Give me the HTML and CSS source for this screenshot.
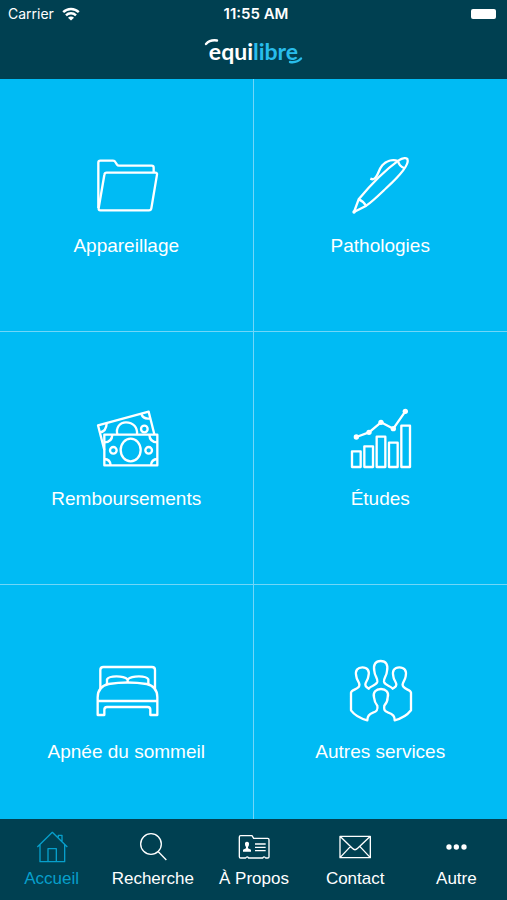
FILE: index.html
```html
<!DOCTYPE html>
<html lang="fr">
<head>
  <meta charset="UTF-8">
  <meta name="viewport" content="width=device-width, initial-scale=1.0">
  <title>Équilibre</title>
  <link rel="stylesheet" href="styles.css">
</head>
<body>

  <div class="app">

    <header class="header">
      <div class="status-bar">
        <div class="status-left">
          <span>Carrier</span>
          <svg class="wifi" viewBox="0 0 18 14" aria-hidden="true">
            <path d="M1.2 5.2a11 11 0 0 1 15.6 0" />
            <path d="M4 8.4a7 7 0 0 1 10 0" />
            <path class="solid" d="M9 13.500L6 10.700a4.200 4.200 0 0 1 6 0z" />
          </svg>
        </div>
        <span class="status-time">11:55 AM</span>
        <div class="status-right"><span class="battery"></span></div>
      </div>
      <div class="nav-bar">
        <h1 class="logo">
          <span>equi</span><span class="logo-light">libre</span>
          <svg class="logo-arcs" viewBox="0 0 100 30" aria-hidden="true">
            <path d="M3 8Q7 3.500 14 4.500" />
            <path class="arc-bottom" d="M87 26Q94 27 98 22.500" />
          </svg>
        </h1>
      </div>
    </header>

    <main class="tiles">
      <a class="tile" href="#appareillage">
        <svg class="tile-icon" viewBox="104 42 192 192" aria-hidden="true">
          <path d="M117 204V68q0-6 6-6h38q5 0 7 4l5 8q2 3 6 3h98q6 0 6 6v14" />
          <path d="M142 98h146q6 0 5 6l-17 101q-1 6-7 6H123q-6 0-5-7l17-99q1-7 7-7z" />
        </svg>
        <span>Appareillage</span>
      </a>
      <a class="tile" href="#pathologies">
        <svg class="tile-icon" viewBox="114 42 192 192" aria-hidden="true">
          <path d="M132 216L146 178C175 143 219 95 265 62C278 53 292 52 293 60C296 76 266 110 229 144C209 163 189 183 169 197Z" />
          <path d="M146 178Q159 183 168 197" />
          <path d="M264 63Q268 79 282 84" />
          <path d="M264 63C246 57 228 64 217 76C204 91 204 112 191 117Q187 119 181 116" />
          <circle class="solid" cx="132" cy="216" r="5" />
        </svg>
        <span>Pathologies</span>
      </a>
      <a class="tile" href="#remboursements">
        <svg class="tile-icon" viewBox="164 36 192 192" aria-hidden="true">
          <path d="M195 165L176 91L328 50L345 118" />
          <path d="M182 112Q201 109 202 85M306 57Q312 74 333 70" />
          <path d="M234 118C229 98 241 82 260 82C282 82 295 98 293 118" />
          <circle cx="315" cy="102" r="10" />
          <path d="M195 119H354V211H195Z" />
          <ellipse cx="274" cy="165" rx="30" ry="34" />
          <circle cx="222" cy="166" r="10" />
          <circle cx="328" cy="166" r="10" />
          <path d="M195 142Q218 142 219 119M330 119Q331 142 354 142M195 192Q213 193 214 211M335 211Q336 193 354 192" />
        </svg>
        <span>Remboursements</span>
      </a>
      <a class="tile" href="#etudes">
        <svg class="tile-icon" viewBox="114 36 192 192" aria-hidden="true">
          <path d="M126 169h26v47h-26zM163 154h26v62h-26zM200 125h26v91h-26zM237 143h26v73h-26zM274 92h26v124h-26z" />
          <path d="M139 126L177 112L213 82L250 101L286 49" />
          <g class="solid">
            <circle cx="139" cy="126" r="8" />
            <circle cx="177" cy="112" r="8" />
            <circle cx="213" cy="82" r="8" />
            <circle cx="250" cy="101" r="8" />
            <circle cx="286" cy="49" r="8" />
          </g>
        </svg>
        <span>Études</span>
      </a>
      <a class="tile" href="#apnee">
        <svg class="tile-icon" viewBox="164 30 192 192" aria-hidden="true">
          <path d="M183 116V60q0-9 9-9h146q9 0 9 9v56" />
          <path d="M203 103V88C210 76 251 76 265 88C279 76 320 76 327 88V103" />
          <path d="M265 87v10" />
          <path d="M175 195V142C175 119 186 107 208 102Q265 93 322 102C344 107 354 119 354 142V195H333V179q0-8-8-8H203q-8 0-8 8v16z" />
          <path d="M175 153h179" />
        </svg>
        <span>Apnée du sommeil</span>
      </a>
      <a class="tile" href="#services">
        <svg class="tile-icon" viewBox="144 45 192 192" aria-hidden="true">
          <path d="M202 226C177 219 161 207 153 196V143C154 133 181 132 178 119C178 110 170 107 169 94C164 75 174 67 187 67C202 67 210 77 205 94C204 106 196 110 196 119C196 126 201 127 206 131C213 121 230 122 232 110C233 98 224 94 223 78C219 58 227 48 242 48C258 48 265 59 261 78C260 94 251 98 252 110C254 122 271 121 278 131C283 127 289 126 289 119C289 110 281 106 280 94C276 77 283 67 298 67C312 67 321 76 317 94C315 107 308 110 308 119C306 132 332 133 333 143V196C323 209 308 220 284 226Q285 209 265 203C250 198 252 190 253 182C261 174 263 166 263 157C268 142 257 132 243 132C228 132 218 142 222 157C223 167 225 174 232 182C234 193 232 199 219 203Q202 209 202 226Z" />
        </svg>
        <span>Autres services</span>
      </a>
    </main>

    <nav class="tab-bar">
      <a class="tab active" href="#accueil">
        <svg class="tab-icon" viewBox="106 63 96 96" aria-hidden="true">
          <path d="M110 111L155 67L200 111M118 104v51h74v-51M142 155v-39h25v39M173 82v-6h11v19" />
        </svg>
        <span>Accueil</span>
      </a>
      <a class="tab" href="#recherche">
        <svg class="tab-icon" viewBox="410 63 96 96" aria-hidden="true">
          <circle cx="452" cy="102" r="31" />
          <path d="M474 125L498 150" />
        </svg>
        <span>Recherche</span>
      </a>
      <a class="tab" href="#apropos">
        <svg class="tab-icon" viewBox="715 63 96 96" aria-hidden="true">
          <path d="M723 77h34l5 8h42q4 0 4 4v52q0 3-4 3h-6q-4-7-9 0h-42q-5-7-9 0h-15q-4 0-4-4V81q0-4 4-4z" />
          <path class="solid" d="M742 95q7 0 6 8q0 5-3 8v4l9 4v6h-24v-6l9-4v-4q-3-3-3-8q-1-8 6-8z" />
          <path d="M766 102h32M766 112h32M766 122h32" />
        </svg>
        <span>À Propos</span>
      </a>
      <a class="tab" href="#contact">
        <svg class="tab-icon" viewBox="261 63 96 96" aria-hidden="true">
          <path d="M264 79h91v64h-91zM264 79L301 115Q309 123 317 115L355 79M264 143L295 110M355 143L324 110" />
        </svg>
        <span>Contact</span>
      </a>
      <a class="tab" href="#autre">
        <svg class="tab-icon" viewBox="564 63 96 96" aria-hidden="true">
          <g class="solid">
            <circle cx="591" cy="111" r="8" />
            <circle cx="613" cy="111" r="8" />
            <circle cx="636" cy="111" r="8" />
          </g>
        </svg>
        <span>Autre</span>
      </a>
    </nav>

  </div>

</body>
</html>
```
FILE: styles.css
```css
:root {
  --dark: #004051;
  --blue: #00bbf4;
  --line: #70d6f8;
  --logo-blue: #28bdeb;
  --tab-active: #079fcb;
}
* {
  box-sizing: border-box;
}
body {
  margin: 0;
  font-family: "Liberation Sans", Arial, sans-serif;
  background-color: var(--blue);
  color: #fff;
}
a {
  color: inherit;
  text-decoration: none;
}
svg {
  fill: none;
  stroke: currentColor;
  stroke-linejoin: round;
  overflow: visible;
}
.solid {
  fill: currentColor;
  stroke: none;
}
.app {
  display: flex;
  flex-direction: column;
  height: 100vh;
}

/* Barre de statut et logo */
.header {
  flex: none;
  background-color: var(--dark);
}
.status-bar {
  display: grid;
  grid-template-columns: 1fr auto 1fr;
  align-items: center;
  height: 27px;
  padding: 0 3px 0 8px;
  font-family: Inter, sans-serif;
  font-size: 14px;
}
.status-left {
  display: flex;
  align-items: center;
  gap: 8px;
}
.status-time {
  font-size: 15px;
  font-weight: 600;
}
.status-right {
  display: flex;
  justify-content: flex-end;
  padding-right: 8px;
}
.wifi {
  width: 18px;
  height: 14px;
  stroke-width: 2.4;
}
.battery {
  width: 25px;
  height: 10px;
  border-radius: 2px;
  background-color: #fff;
}
.nav-bar {
  display: flex;
  justify-content: center;
  height: 52px;
  padding-top: 9px;
}
.logo {
  position: relative;
  display: flex;
  margin: 0;
  font-family: Lato, sans-serif;
  font-size: 23px;
  font-weight: 700;
  line-height: 30px;
}
.logo-light {
  color: var(--logo-blue);
}
.logo-arcs {
  position: absolute;
  top: 0;
  left: 50%;
  width: 100px;
  height: 30px;
  margin-left: -50px;
  stroke-width: 2.4;
  stroke-linecap: round;
}
.arc-bottom {
  stroke: var(--logo-blue);
}

/* Grille des rubriques */
.tiles {
  flex: 1;
  min-height: 0;
  overflow: hidden;
  display: grid;
  grid-template-columns: 1fr 1fr;
  grid-auto-rows: 253px;
}
.tile {
  display: flex;
  flex-direction: column;
  align-items: center;
  gap: 16px;
  padding-top: 75px;
  border-bottom: 1px solid var(--line);
  font-size: 19px;
  line-height: 24px;
}
.tile:nth-child(odd) {
  border-right: 1px solid var(--line);
}
.tile-icon {
  width: 64px;
  height: 64px;
  stroke-width: 7;
}

/* Barre d'onglets */
.tab-bar {
  flex: none;
  display: grid;
  grid-template-columns: repeat(5, 1fr);
  height: 81px;
  padding-left: 1px;
  background-color: var(--dark);
}
.tab {
  display: flex;
  flex-direction: column;
  align-items: center;
  gap: 6px;
  padding-top: 12px;
  font-size: 17px;
  line-height: 20px;
  white-space: nowrap;
}
.tab.active {
  color: var(--tab-active);
}
.tab-icon {
  width: 32px;
  height: 32px;
  stroke-width: 4;
}
```
